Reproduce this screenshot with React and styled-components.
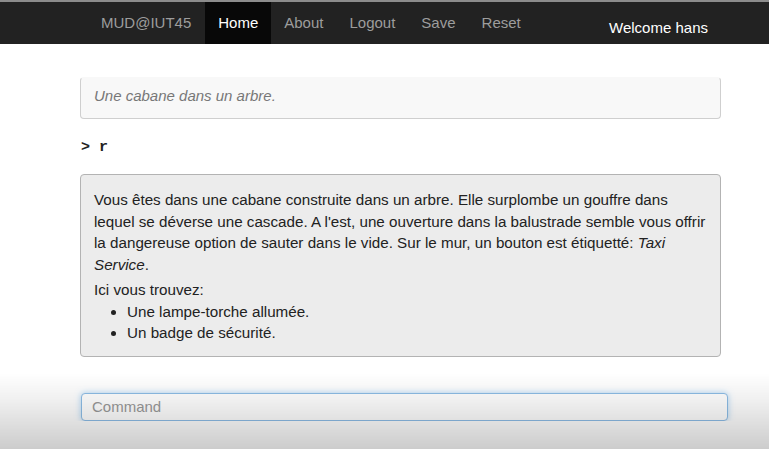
import React from "react";
import styled, { createGlobalStyle } from "styled-components";

const Global = createGlobalStyle`
  html, body { margin: 0; padding: 0; background: #fff; }
  body { font-family: "Liberation Sans", Arial, sans-serif; color: #222; }
  * { box-sizing: border-box; }
`;

const Navbar = styled.nav`
  height: 44px;
  border-top: 2px solid #8c8c8c;
  background: #222;
  display: flex;
  align-items: stretch;
  font-size: 15px;
`;

const Brand = styled.a`
  margin-left: 101px;
  padding-right: 14px;
  line-height: 42px;
  color: #9d9d9d;
  text-decoration: none;
`;

const NavItem = styled.a`
  padding: 0 13px;
  line-height: 42px;
  color: ${(p) => (p.$active ? "#fff" : "#9d9d9d")};
  background: ${(p) => (p.$active ? "#080808" : "transparent")};
  text-decoration: none;
`;

const Welcome = styled.span`
  margin-left: auto;
  margin-right: 61px;
  padding-top: 5px;
  line-height: 42px;
  color: #fff;
`;

const Main = styled.main`
  padding-left: 80px;
  display: flex;
  flex-direction: column;
  font-size: 15px;
`;

const Panel = styled.div`
  width: 641px;
  border: 1px solid ${(p) => p.$border};
  background: ${(p) => p.$bg};
  border-radius: 4px;
  padding: ${(p) => p.$pad};
  line-height: 21.5px;
  font-size: 15.2px;
`;

const Title = styled.div`
  font-style: italic;
  font-size: 15px;
  color: #777;
  line-height: 21px;
`;

const Prompt = styled.div`
  margin-top: 19px;
  margin-left: 1px;
  font-family: "Liberation Mono", "Courier New", monospace;
  font-weight: bold;
  font-size: 15px;
  line-height: 20px;
  color: #222;
  white-space: pre;
`;

const Para = styled.p`
  margin: 0 0 4px;
`;

const List = styled.ul`
  margin: 0;
  padding-left: 33px;
`;

const Form = styled.form`
  margin-top: 36px;
  margin-left: 1px;
  width: 647px;
`;

const Input = styled.input`
  width: 100%;
  height: 28px;
  padding: 0 10px;
  border: 1px solid #8dbde6;
  border-radius: 4px;
  box-shadow: 0 0 6px rgba(102, 175, 233, 0.55);
  font-family: "Liberation Sans", Arial, sans-serif;
  font-size: 15px;
  color: #222;
  background: #fff;
  outline: none;
  caret-color: #333;
  &::placeholder { color: #999; }
`;

const Shade = styled.div`
  position: fixed;
  left: 0;
  right: 0;
  bottom: 0;
  height: 76px;
  pointer-events: none;
  background: linear-gradient(to bottom, rgba(0,0,0,0) 0%, rgba(0,0,0,0.06) 35%, rgba(0,0,0,0.2) 100%);
`;

export default function App() {
  return (
    <>
      <Global />
      <Navbar>
        <Brand>MUD@IUT45</Brand>
        <NavItem $active>Home</NavItem>
        <NavItem>About</NavItem>
        <NavItem>Logout</NavItem>
        <NavItem>Save</NavItem>
        <NavItem>Reset</NavItem>
        <Welcome>Welcome hans</Welcome>
      </Navbar>
      <Main>
        <Panel
          $bg="#f8f8f8"
          $border="#cfcfcf"
          $pad="7px 13px 12px"
          style={{ marginTop: 33, borderTopColor: "transparent" }}
        >
          <Title>Une cabane dans un arbre.</Title>
        </Panel>
        <Prompt>{"> r"}</Prompt>
        <Panel $bg="#ececec" $border="#b3b3b3" $pad="14px 13px 12px" style={{ marginTop: 16 }}>
          <Para>
            Vous êtes dans une cabane construite dans un arbre. Elle surplombe un gouffre dans
            lequel se déverse une cascade. A l'est, une ouverture dans la balustrade semble vous offrir
            la dangereuse option de sauter dans le vide. Sur le mur, un bouton est étiquetté: <i>Taxi
            Service</i>.
          </Para>
          <Para style={{ margin: 0 }}>Ici vous trouvez:</Para>
          <List>
            <li>Une lampe-torche allumée.</li>
            <li>Un badge de sécurité.</li>
          </List>
        </Panel>
        <Form onSubmit={(e) => e.preventDefault()}>
          <Input placeholder="Command" />
        </Form>
      </Main>
      <Shade />
    </>
  );
}
